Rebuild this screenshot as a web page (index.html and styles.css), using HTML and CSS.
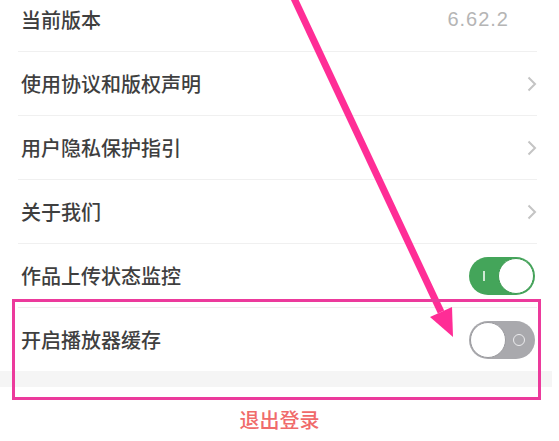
FILE: index.html
```html
<!DOCTYPE html>
<html>
<head>
    <title>设置</title>
    <link rel="stylesheet" href="styles.css">
</head>
<body>
    <div class="page">
        <ul class="settings">
            <li class="row">
                <span class="label">当前版本</span>
                <span class="version">6.62.2</span>
            </li>
            <li class="row">
                <span class="label">使用协议和版权声明</span>
                <svg class="chevron" width="10" height="16" viewBox="0 0 10 16"><path d="M1.5 1.5 L8 8 L1.5 14.5" /></svg>
            </li>
            <li class="row">
                <span class="label">用户隐私保护指引</span>
                <svg class="chevron" width="10" height="16" viewBox="0 0 10 16"><path d="M1.5 1.5 L8 8 L1.5 14.5" /></svg>
            </li>
            <li class="row">
                <span class="label">关于我们</span>
                <svg class="chevron" width="10" height="16" viewBox="0 0 10 16"><path d="M1.5 1.5 L8 8 L1.5 14.5" /></svg>
            </li>
            <li class="row">
                <span class="label">作品上传状态监控</span>
                <span class="switch on">
                    <span class="mark"></span>
                    <span class="knob"></span>
                </span>
            </li>
            <li class="row last">
                <span class="label">开启播放器缓存</span>
                <span class="switch off">
                    <span class="knob"></span>
                    <span class="mark"></span>
                </span>
            </li>
        </ul>

        <div class="gap"></div>

        <div class="logout">退出登录</div>
    </div>

    <!-- annotation drawn over the screenshot -->
    <svg class="annotation" width="559" height="441" viewBox="0 0 559 441">
        <line x1="292" y1="-6" x2="441" y2="312" stroke="#ff2d96" stroke-width="7" />
        <polygon points="430,317 452,307 453,337" fill="#ff2d96" />
        <rect x="13.5" y="300.5" width="526" height="98" fill="none" stroke="#ec3a9c" stroke-width="3" />
    </svg>
</body>
</html>
```

FILE: styles.css
```css
body {
    margin: 0;
    background-color: #fff;
    font-family: "Noto Sans CJK SC", "Noto Sans", sans-serif;
    color: #3f3f3f;
    overflow: hidden;
}

.page {
    margin-top: -12px;
}

.settings {
    list-style: none;
    margin: 0 22px 0 18px;
    padding: 0;
}

.row {
    display: flex;
    align-items: center;
    justify-content: space-between;
    height: 63px;
    border-bottom: 1px solid #f0f0f0;
}

.row.last {
    border-bottom: none;
}

.label {
    padding-left: 3px;
    font-size: 20px;
    font-weight: 500;
}

.version {
    margin-right: 28px;
    font-family: "Liberation Sans", Arial, sans-serif;
    font-size: 20px;
    letter-spacing: 1px;
    color: #b5b5b5;
}

.chevron path {
    fill: none;
    stroke: #c4c4c4;
    stroke-width: 2;
}

.switch {
    display: flex;
    align-items: center;
    justify-content: space-between;
    box-sizing: border-box;
    width: 66px;
    height: 38px;
    margin-right: 2px;
    padding: 1px;
    border-radius: 19px;
}

.switch.on {
    background-color: #44a55a;
}

.switch.off {
    background-color: #a9a9ad;
}

.knob {
    box-sizing: border-box;
    width: 36px;
    height: 36px;
    border-radius: 50%;
    background-color: #fff;
}

.switch.on .knob {
    border: 1px solid #3d9a52;
}

.switch.off .knob {
    border: 1px solid #9a9a9e;
}

.switch.on .mark {
    width: 2px;
    height: 10px;
    margin-left: 13px;
    background-color: #cfe9d4;
}

.switch.off .mark {
    box-sizing: border-box;
    width: 12px;
    height: 12px;
    margin-right: 9px;
    border: 1.5px solid #ececee;
    border-radius: 50%;
}

.gap {
    height: 16px;
    margin-right: 7px;
    background-color: #f5f5f5;
}

.logout {
    padding-top: 18px;
    text-align: center;
    font-size: 20px;
    font-weight: 500;
    line-height: 30px;
    color: #f06b6b;
}

.annotation {
    position: absolute;
    top: 0;
    left: 0;
    pointer-events: none;
}
```
